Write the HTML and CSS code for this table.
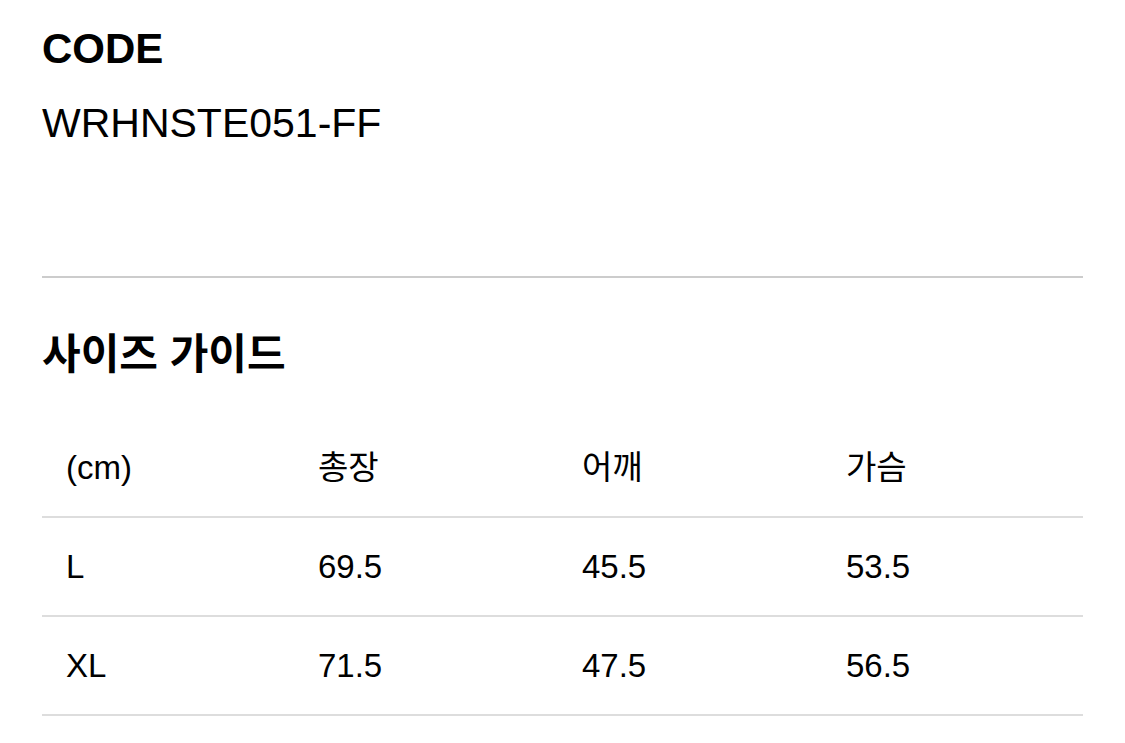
FILE: index.html
```html
<!DOCTYPE html>
<html lang="ko">
<head>
<meta charset="utf-8">
<title>CODE / 사이즈 가이드</title>
<link rel="stylesheet" href="styles.css">
</head>
<body>
<main class="page">
  <section class="code">
    <h2 class="code-title">CODE</h2>
    <p class="code-value">WRHNSTE051-FF</p>
  </section>
  <hr class="divider">
  <section class="size">
    <h2 class="size-title">사이즈 가이드</h2>
    <div class="table">
      <div class="row">
        <div class="cell">(cm)</div>
        <div class="cell">총장</div>
        <div class="cell">어깨</div>
        <div class="cell">가슴</div>
      </div>
      <div class="row">
        <div class="cell">L</div>
        <div class="cell">69.5</div>
        <div class="cell">45.5</div>
        <div class="cell">53.5</div>
      </div>
      <div class="row">
        <div class="cell">XL</div>
        <div class="cell">71.5</div>
        <div class="cell">47.5</div>
        <div class="cell">56.5</div>
      </div>
    </div>
  </section>
</main>
</body>
</html>
```

FILE: styles.css
```css
html, body {
  margin: 0;
  padding: 0;
  background: #ffffff;
}

body {
  font-family: "Liberation Sans", "Noto Sans CJK KR", sans-serif;
  color: #000000;
}

.page {
  width: 1041px;
  padding: 24px 0 0 42px;
}

.code-title {
  margin: 0;
  font-size: 42px;
  line-height: 1.2;
  font-weight: 700;
}

.code-value {
  margin: 25px 0 0;
  font-size: 41px;
  line-height: 1.2;
  font-weight: 400;
}

.divider {
  margin: 127px 0 0;
  border: 0;
  height: 2px;
  background: #cccccc;
}

.size-title {
  margin: 48px 0 0;
  font-family: "Noto Sans CJK KR", sans-serif;
  font-size: 42px;
  line-height: 1.2;
  font-weight: 700;
}

.table {
  margin-top: 43px;
}

.row {
  display: grid;
  grid-template-columns: 252px 264px 264px 1fr;
  height: 97px;
  align-items: center;
  border-bottom: 2px solid #dddddd;
}

.cell {
  padding-left: 24px;
  font-size: 33px;
  line-height: 1;
}
```
